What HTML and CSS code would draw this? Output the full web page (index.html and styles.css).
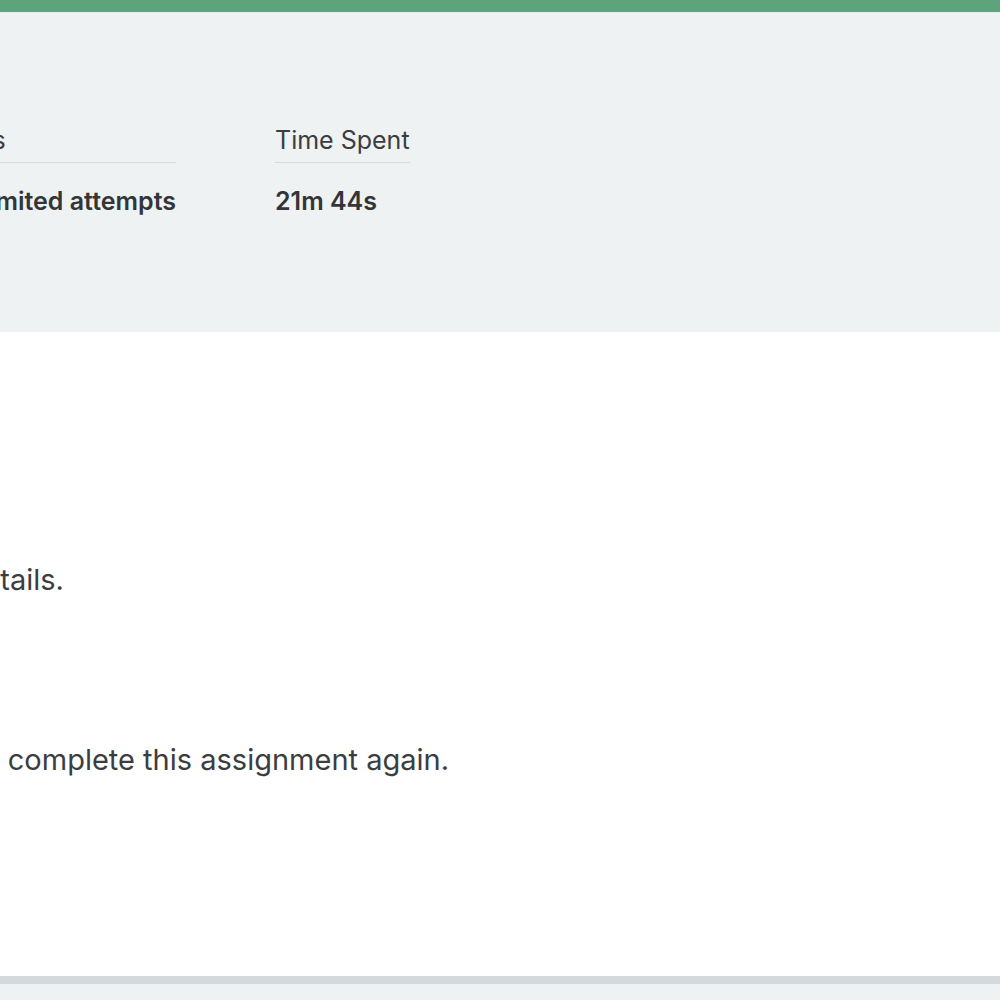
FILE: index.html
```html
<!DOCTYPE html>
<html lang="en">
<head>
<meta charset="utf-8">
<title>Assignment Results</title>
<link rel="stylesheet" href="styles.css">
</head>
<body>
<div class="page">
  <div class="topbar"></div>
  <section class="summary">
    <div class="stats">
      <div class="stat-slot">
        <div class="stat">
          <div class="stat-label">Attempts</div>
          <div class="stat-value">1 of Unlimited attempts</div>
        </div>
      </div>
      <div class="stat">
        <div class="stat-label">Time Spent</div>
        <div class="stat-value">21m 44s</div>
      </div>
    </div>
  </section>
  <main class="content">
    <div class="messages">
      <p class="msg msg-first">Review the full results page for more details.</p>
      <p class="msg msg-second">You have unlimited attempts, so you can complete this assignment again.</p>
    </div>
  </main>
  <div class="footer-rule"></div>
  <div class="footer"></div>
</div>
</body>
</html>
```
FILE: styles.css
```css
html, body {
  margin: 0;
  padding: 0;
  background: #eef2f2;
}
body {
  font-family: Inter, "Open Sans", "Liberation Sans", sans-serif;
  color: #3b3d40;
}
.page {
  width: 1000px;
  height: 1000px;
  overflow: hidden;
  display: flex;
  flex-direction: column;
}
.topbar {
  height: 12px;
  background: #5da37b;
  border-bottom: 1px solid #e8efea;
  flex-shrink: 0;
}
.summary {
  height: 319px;
  background: #eef2f2;
  flex-shrink: 0;
  box-sizing: border-box;
  padding-top: 108px;
}
.stats {
  display: flex;
  gap: 99px;
}
.stat-slot {
  width: 176px;
  display: flex;
  justify-content: flex-end;
  flex-shrink: 0;
}
.stat {
  flex-shrink: 0;
  display: flex;
  flex-direction: column;
}
.stat-label {
  font-size: 25px;
  line-height: 38px;
  border-bottom: 1px solid #d5dbdb;
  padding-bottom: 3px;
  white-space: nowrap;
}
.stat-value {
  font-size: 25px;
  font-weight: 600;
  line-height: 38px;
  margin-top: 19px;
  white-space: nowrap;
  color: #333538;
}
.content {
  background: #ffffff;
  flex: 1;
  padding-top: 227px;
  overflow: hidden;
}
.messages {
  margin-left: -552px;
}
.msg {
  margin: 0;
  font-size: 29px;
  line-height: 42px;
  white-space: nowrap;
}
.msg-first {
  padding-left: 8px;
}
.msg-second {
  margin-top: 138px;
}
.footer-rule {
  height: 8px;
  background: #d4d9dc;
  flex-shrink: 0;
}
.footer {
  height: 16px;
  background: #eef2f2;
  flex-shrink: 0;
}
```
